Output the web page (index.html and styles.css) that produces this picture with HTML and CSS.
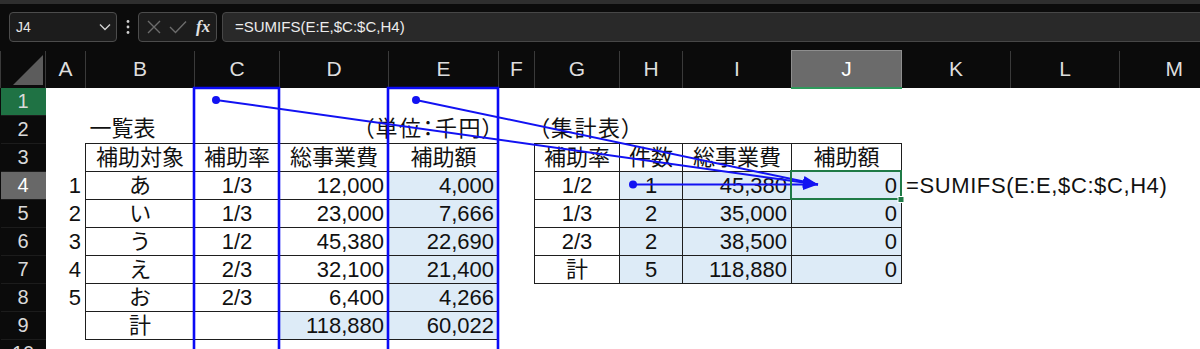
FILE: index.html
```html
<!DOCTYPE html>
<html lang="ja">
<head>
    <meta charset="UTF-8">
    <title>SUMIFS 集計表</title>
    <link rel="stylesheet" href="styles.css">
</head>
<body>
    <div class="titlebar"></div>
    <div class="formula-bar">
        <div class="name-box">
            <span>J4</span>
            <svg class="chevron" width="12" height="8" viewBox="0 0 12 8"><path d="M1 1.5 L6 6.5 L11 1.5" fill="none" stroke="#d0d0d0" stroke-width="1.4"/></svg>
        </div>
        <div class="grip">
            <svg width="6" height="16" viewBox="0 0 6 16"><circle cx="3" cy="2.5" r="1.4"/><circle cx="3" cy="8" r="1.4"/><circle cx="3" cy="13.5" r="1.4"/></svg>
        </div>
        <div class="edit-box">
            <svg width="16" height="14" viewBox="0 0 16 14"><path d="M2 1 L14 13 M14 1 L2 13" stroke="#6c6c6c" stroke-width="1.4"/></svg>
            <svg width="18" height="14" viewBox="0 0 18 14"><path d="M1 7 L6.5 12.5 L17 1.5" fill="none" stroke="#6c6c6c" stroke-width="1.4"/></svg>
            <span class="fx">fx</span>
        </div>
        <div class="formula-input">=SUMIFS(E:E,$C:$C,H4)</div>
    </div>

    <table class="sheet">
        <colgroup>
            <col class="w-rh"><col class="w-a"><col class="w-b"><col class="w-c"><col class="w-d"><col class="w-e"><col class="w-f">
            <col class="w-g"><col class="w-h"><col class="w-i"><col class="w-j"><col class="w-k"><col class="w-l"><col class="w-m">
        </colgroup>
        <tr class="col-head">
            <th class="corner"><span class="tri"></span></th>
            <th>A</th><th>B</th><th>C</th><th>D</th><th>E</th><th>F</th>
            <th>G</th><th>H</th><th>I</th><th class="active">J</th><th>K</th><th>L</th><th>M</th>
        </tr>
        <tr>
            <th class="rh marked">1</th>
            <td></td><td></td><td></td><td></td><td></td><td></td><td></td><td></td><td></td><td></td><td></td><td></td><td></td>
        </tr>
        <tr>
            <th class="rh">2</th>
            <td></td><td class="l">一覧表</td><td></td><td class="r unit" colspan="2">（単位：千円）</td><td></td>
            <td class="l unit">（集計表）</td><td></td><td></td><td></td><td></td><td></td><td></td>
        </tr>
        <tr>
            <th class="rh">3</th>
            <td></td><td class="bx c">補助対象</td><td class="bx c">補助率</td><td class="bx c">総事業費</td><td class="bx c">補助額</td><td></td>
            <td class="bx c">補助率</td><td class="bx c">件数</td><td class="bx c">総事業費</td><td class="bx c">補助額</td><td></td><td></td><td></td>
        </tr>
        <tr>
            <th class="rh current">4</th>
            <td class="r">1</td><td class="bx c">あ</td><td class="bx c">1/3</td><td class="bx r">12,000</td><td class="bx r fill">4,000</td><td></td>
            <td class="bx c">1/2</td><td class="bx c fill">1</td><td class="bx r fill">45,380</td><td class="bx r fill">0</td><td class="l formula-text">=SUMIFS(E:E,$C:$C,H4)</td><td></td><td></td>
        </tr>
        <tr>
            <th class="rh">5</th>
            <td class="r">2</td><td class="bx c">い</td><td class="bx c">1/3</td><td class="bx r">23,000</td><td class="bx r fill">7,666</td><td></td>
            <td class="bx c">1/3</td><td class="bx c fill">2</td><td class="bx r fill">35,000</td><td class="bx r fill">0</td><td></td><td></td><td></td>
        </tr>
        <tr>
            <th class="rh">6</th>
            <td class="r">3</td><td class="bx c">う</td><td class="bx c">1/2</td><td class="bx r">45,380</td><td class="bx r fill">22,690</td><td></td>
            <td class="bx c">2/3</td><td class="bx c fill">2</td><td class="bx r fill">38,500</td><td class="bx r fill">0</td><td></td><td></td><td></td>
        </tr>
        <tr>
            <th class="rh">7</th>
            <td class="r">4</td><td class="bx c">え</td><td class="bx c">2/3</td><td class="bx r">32,100</td><td class="bx r fill">21,400</td><td></td>
            <td class="bx c">計</td><td class="bx c fill">5</td><td class="bx r fill">118,880</td><td class="bx r fill">0</td><td></td><td></td><td></td>
        </tr>
        <tr>
            <th class="rh">8</th>
            <td class="r">5</td><td class="bx c">お</td><td class="bx c">2/3</td><td class="bx r">6,400</td><td class="bx r fill">4,266</td><td></td>
            <td></td><td></td><td></td><td></td><td></td><td></td><td></td>
        </tr>
        <tr>
            <th class="rh">9</th>
            <td></td><td class="bx c">計</td><td class="bx c"></td><td class="bx r fill">118,880</td><td class="bx r fill">60,022</td><td></td>
            <td></td><td></td><td></td><td></td><td></td><td></td><td></td>
        </tr>
        <tr>
            <th class="rh">10</th>
            <td></td><td></td><td></td><td></td><td></td><td></td><td></td><td></td><td></td><td></td><td></td><td></td><td></td>
        </tr>
    </table>

    <!-- range outlines, trace-precedent arrows and the active cell sit over the grid -->
    <svg class="overlay" width="1200" height="349" viewBox="0 0 1200 349">
        <defs>
            <marker id="arrow-head" markerUnits="userSpaceOnUse" markerWidth="16" markerHeight="11" refX="15" refY="5.5" orient="auto">
                <path d="M0 0 L15 5.5 L0 11 Z" fill="#1212f2"/>
            </marker>
        </defs>
        <path class="range" d="M194 352 V88 H279 V352 M388 352 V88 H498 V352"/>
        <g class="trace">
            <line x1="216" y1="100" x2="818" y2="184.5" marker-end="url(#arrow-head)"/>
            <line x1="416" y1="100" x2="818" y2="184.5" marker-end="url(#arrow-head)"/>
            <line x1="633" y1="184.5" x2="818" y2="184.5" marker-end="url(#arrow-head)"/>
            <circle cx="216" cy="100" r="4"/>
            <circle cx="416" cy="100" r="4"/>
            <circle cx="633" cy="184.5" r="4"/>
        </g>
        <rect class="active-cell" x="791" y="171" width="110" height="28"/>
        <rect class="handle" x="898" y="196.5" width="6" height="6"/>
    </svg>
</body>
</html>
```

FILE: styles.css
```css
* {box-sizing: border-box;}
body {
    margin: 0;
    width: 1200px;
    height: 349px;
    overflow: hidden;
    position: relative;
    background: #0b0b0b;
    font-family: "Liberation Sans", "Noto Sans CJK JP", sans-serif;
}

.titlebar {
    height: 4px;
    background: #2e2e2e;
}

/* formula bar */
.formula-bar {
    display: flex;
    height: 30px;
    margin: 8px 0 8px 9px;
}
.name-box {
    width: 108px;
    display: flex;
    align-items: center;
    justify-content: space-between;
    padding: 0 5px 0 6px;
    background: #1c1c1c;
    border: 1px solid #4c4c4c;
    border-radius: 4px;
    color: #e6e6e6;
    font-size: 14px;
}
.grip {
    width: 21px;
    display: flex;
    align-items: center;
    justify-content: center;
    fill: #cfcfcf;
}
.edit-box {
    width: 79px;
    display: flex;
    align-items: center;
    gap: 7px;
    padding-left: 7px;
    background: #1c1c1c;
    border: 1px solid #4c4c4c;
    border-radius: 4px;
}
.edit-box .fx {
    font-family: "Liberation Serif", serif;
    font-style: italic;
    font-weight: bold;
    font-size: 17px;
    color: #e2e2e2;
    margin-left: 2px;
}
.formula-input {
    flex: 1;
    margin-left: 5px;
    margin-right: -20px;
    padding-left: 12px;
    background: #292929;
    border: 1px solid #474747;
    border-radius: 4px;
    color: #ececec;
    font-size: 15px;
    line-height: 28px;
}

/* grid */
.sheet {
    border-collapse: collapse;
    table-layout: fixed;
    width: 1228px;
    font-size: 22px;
    font-feature-settings: "palt";
}
.w-rh {width: 45px;}
.w-a {width: 40px;}
.w-b, .w-d, .w-i, .w-k, .w-l, .w-m {width: 109px;}
.w-c, .w-g {width: 85px;}
.w-e, .w-j {width: 110px;}
.w-f {width: 36px;}
.w-h {width: 63px;}

.sheet tr {height: 28px;}
.sheet .col-head {height: 37px;}

.col-head th {
    background: #0b0b0b;
    border-left: 1px solid #3a3a3a;
    color: #dedede;
    font-weight: normal;
    font-size: 21px;
    padding: 0;
}
.col-head th.active {
    background: #6b6b6b;
    border: 1px solid #8e8e8e;
    border-bottom: 2px solid #2f9a5c;
    color: #fff;
}
.corner {
    position: relative;
}
.corner .tri {
    position: absolute;
    right: 2px;
    bottom: 3px;
    width: 0;
    height: 0;
    border-left: 30px solid transparent;
    border-bottom: 30px solid #5c5c5c;
}

.rh {
    background: #0b0b0b;
    border-bottom: 1px solid #1c1c1c;
    color: #dadada;
    font-weight: normal;
    font-size: 20px;
    padding: 0;
}
.rh.marked {background: #1f7244;}
.rh.current {background: #686868; color: #fff;}

.sheet td {
    background: #fff;
    color: #111;
    padding: 0 4px;
    line-height: 26px;
    white-space: nowrap;
}
.sheet td.bx {border: 1px solid #1e1e1e;}
.sheet td.fill {background: #ddebf7;}
.sheet td.unit {letter-spacing: 1.5px;}
.sheet td.formula-text {letter-spacing: 0.6px;}
.l {text-align: left;}
.c {text-align: center;}
.r {text-align: right;}

/* overlay */
.overlay {
    position: absolute;
    top: 0;
    left: 0;
    pointer-events: none;
}
.range {
    fill: none;
    stroke: #0b0bf5;
    stroke-width: 2.6;
}
.trace line {
    stroke: #1212f2;
    stroke-width: 2;
}
.trace circle {fill: #1212f2;}
.active-cell {
    fill: none;
    stroke: #1f7a46;
    stroke-width: 2;
}
.handle {
    fill: #1f7a46;
    stroke: #fff;
    stroke-width: 1;
}
```
